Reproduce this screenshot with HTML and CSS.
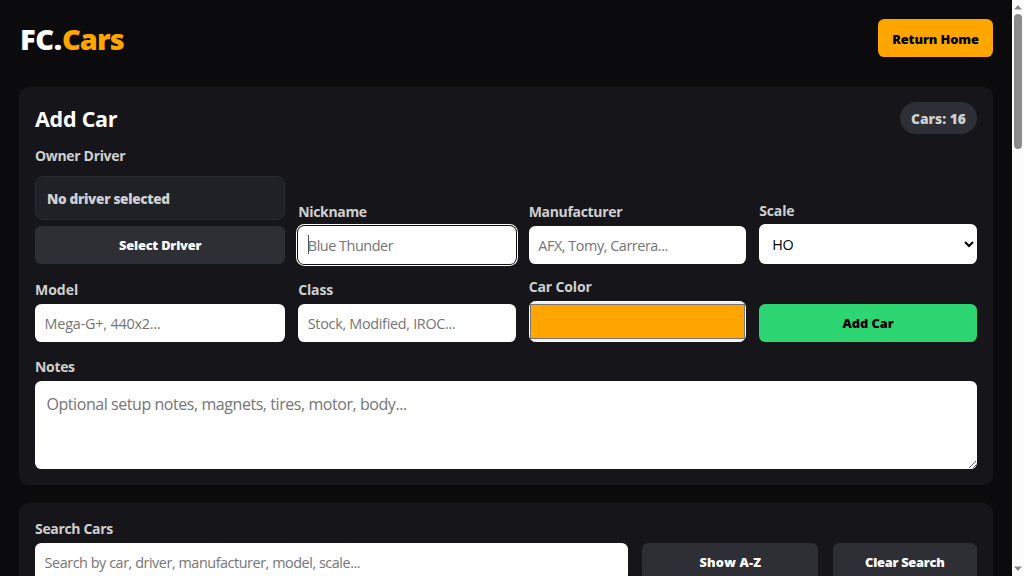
FILE: index.html
```html
<!DOCTYPE html>
<html lang="en">
<head>
<meta charset="utf-8">
<title>FC.Cars</title>
<link rel="stylesheet" href="styles.css">
</head>
<body>
<div class="page">
  <header class="header">
    <div class="logo">FC.<span class="accent">Cars</span></div>
    <button class="btn home">Return Home</button>
  </header>
  <section class="panel add">
    <div class="panel-head"><h2 class="title">Add Car</h2><div class="pill">Cars: 16</div></div>
    <div class="grid">
      <div class="field owner">
        <span class="label">Owner Driver</span>
        <div class="driver">No driver selected</div>
        <button class="btn dark select-driver">Select Driver</button>
      </div>
      <label class="field"><span class="label">Nickname</span><input class="input focused" placeholder="Blue Thunder"><span class="caret"></span></label>
      <label class="field"><span class="label">Manufacturer</span><input class="input maker" placeholder="AFX, Tomy, Carrera..."></label>
      <label class="field scale"><span class="label short">Scale</span><select class="input select"><option>HO</option></select></label>
      <label class="field second-row"><span class="label model-label">Model</span><input class="input model" placeholder="Mega-G+, 440x2..."></label>
      <label class="field second-row"><span class="label short">Class</span><input class="input class" placeholder="Stock, Modified, IROC..."></label>
      <div class="field"><span class="label short">Car Color</span><div class="color"><div class="swatch"></div></div></div>
      <button class="btn green">Add Car</button>
    </div>
    <label class="field notes"><span class="label">Notes</span><textarea class="textarea" placeholder="Optional setup notes, magnets, tires, motor, body..."></textarea></label>
  </section>
  <section class="panel search">
    <label class="field"><span class="label">Search Cars</span><input class="input" placeholder="Search by car, driver, manufacturer, model, scale..."></label>
    <button class="btn dark sort">Show A-Z</button>
    <button class="btn dark clear">Clear Search</button>
  </section>
</div>
<div class="scrollbar">
  <svg width="12" height="12" viewBox="0 0 12 12"><path d="M2 9.500 6 5l4 4.500z" fill="#8b8b8b"/></svg>
  <div class="thumb"></div>
  <svg width="12" height="12" viewBox="0 0 12 12"><path d="M2 2.500h8L6 7z" fill="#8b8b8b"/></svg>
</div>
</body>
</html>
```
FILE: styles.css
```css
* { box-sizing: border-box; }
html, body { margin: 0; height: 576px; overflow: hidden; background: #0b0b0d; }
body { display: flex; color: #fff; font-family: "Open Sans", "Noto Sans", sans-serif; }
.page { flex: 1; min-width: 0; height: 576px; overflow: hidden; padding: 19px 19px 0; }
.header { display: flex; justify-content: space-between; align-items: flex-start; height: 67.600px; }
.logo { font-size: 29px; font-weight: 800; line-height: 40px; letter-spacing: -0.300px; padding-left: 1px; white-space: nowrap; }
.accent { color: #ffa500; letter-spacing: -0.900px; }
.btn { display: block; border: 0; padding: 0; height: 38.400px; border-radius: 6.400px; font: 800 12.800px/38px "Open Sans", "Noto Sans", sans-serif; white-space: nowrap; }
.home { width: 115px; background: #ffa500; color: #000; letter-spacing: -0.100px; line-height: 40px; }
.dark { background: #2e2f34; color: #fff; }
.select-driver { letter-spacing: -0.200px; }
.sort { letter-spacing: 0.200px; }
.clear { letter-spacing: -0.250px; }
.green { background: #2ed573; color: #000; }
.panel { background: #16161a; border-radius: 9.600px; }
.add { height: 398.800px; padding: 15.600px 16px 0; }
.panel-head { display: flex; justify-content: space-between; align-items: center; height: 32px; }
.title { margin: 0; font-size: 21.500px; font-weight: 700; line-height: 32px; letter-spacing: -0.250px; padding-top: 2px; }
.pill { height: 32px; width: 77px; border-radius: 16px; background: #2e2f34; color: #d0d0d0; font-size: 13.800px; font-weight: 800; line-height: 33px; text-align: center; white-space: nowrap; }
.grid { display: grid; grid-template-columns: 250.400px 1fr 1fr 1fr; grid-template-rows: 118px 65px; column-gap: 12.800px; row-gap: 13px; margin-top: 12px; align-items: end; }
.field { display: flex; flex-direction: column; gap: 4px; min-width: 0; position: relative; }
.scale, .second-row { gap: 3.400px; }
.label { font-size: 14px; font-weight: 700; line-height: 20px; color: #d0d0d0; letter-spacing: -0.330px; white-space: nowrap; }
.short { letter-spacing: -0.150px; }
.model-label { letter-spacing: 0; }
.driver { height: 43.500px; margin: 6px 0 2.300px; padding-left: 11px; border: 1px solid #2a2b30; border-radius: 8px; background: #202126; color: #d0d0d0; font-size: 13.600px; font-weight: 800; line-height: 43px; letter-spacing: -0.330px; }
.input { width: 100%; height: 38.400px; border: 0; border-radius: 6.400px; padding: 1px 9.600px 0; background: #fff; color: #000; font: 400 14.400px "Open Sans", "Noto Sans", sans-serif; letter-spacing: -0.450px; outline: 0; }
.input::placeholder, .textarea::placeholder { color: #757575; opacity: 1; }
.model { letter-spacing: -0.200px; }
.class { letter-spacing: -0.300px; }
.focused { box-shadow: 0 0 0 1px #101010, 0 0 0 2px #fff; }
.caret { position: absolute; left: 10px; bottom: 10px; width: 1px; height: 19px; background: #555; }
.select { height: 40px; padding: 1px 0 0 9px; letter-spacing: -0.300px; }
.color { height: 41.500px; border-radius: 6.400px; background: #efefef; border: 1px solid #fff; padding: 2px 0 2px 0; }
.swatch { height: 100%; background: #ffa500; border: 1px solid #777; }
.notes { margin-top: 14.600px; }
.textarea { display: block; width: 100%; height: 88.500px; border: 0; border-radius: 6.400px; padding: 11.500px; font: 400 16px/24px "Open Sans", "Noto Sans", sans-serif; letter-spacing: -0.440px; background: #fff; resize: vertical; }
.search { margin-top: 17.400px; height: 90px; padding: 16px 16px 0; display: grid; grid-template-columns: 593px 176px 144px; column-gap: 14.400px; align-items: end; align-content: start; }
.scrollbar { width: 12px; height: 576px; background: #fcfcfc; display: flex; flex-direction: column; }
.scrollbar svg { display: block; flex: none; }
.thumb { width: 8px; height: 135px; margin: 2px 2px auto; border-radius: 4px; background: #8b8b8b; }
```
